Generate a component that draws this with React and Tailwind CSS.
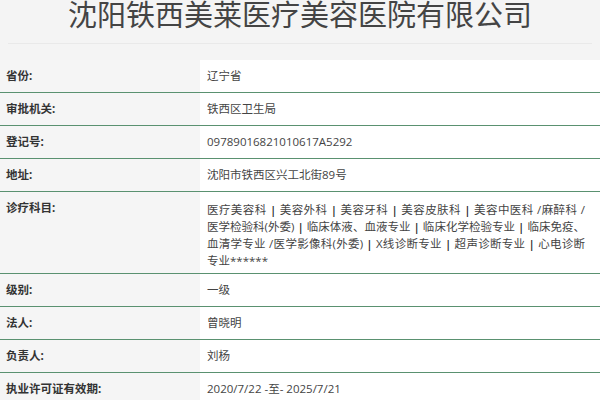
const rows = [
  { label: '省份:', value: '辽宁省' },
  { label: '审批机关:', value: '铁西区卫生局' },
  { label: '登记号:', value: '09789016821010617A5292' },
  { label: '地址:', value: '沈阳市铁西区兴工北街89号' },
  {
    label: '诊疗科目:',
    lines: [
      '医疗美容科 | 美容外科 | 美容牙科 | 美容皮肤科 | 美容中医科 /麻醉科 /',
      '医学检验科(外委) | 临床体液、血液专业 | 临床化学检验专业 | 临床免疫、',
      '血清学专业 /医学影像科(外委) | X线诊断专业 | 超声诊断专业 | 心电诊断',
      '专业******',
    ],
  },
  { label: '级别:', value: '一级' },
  { label: '法人:', value: '曾晓明' },
  { label: '负责人:', value: '刘杨' },
  { label: '执业许可证有效期:', value: '2020/7/22 -至- 2025/7/21' },
];

// bars between the subjects are a little darker than the text
const renderLine = (line) =>
  line.split(' | ').map((part, k) => (
    <span key={k}>
      {k > 0 && (
        <>
          {' '}
          <span className="font-semibold text-[#222]">|</span>{' '}
        </>
      )}
      {part}
    </span>
  ));

const App = () => {
  return (
    <div
      className="w-[600px] h-[400px] overflow-hidden bg-[#f4f4f4]"
      style={{ fontFamily: '"Open Sans", "Noto Sans CJK SC", sans-serif' }}
    >
      <div className="mx-2 h-[44px] border-b border-[#e9e9e9] flex justify-center">
        <h1 className="text-[29px] leading-[29px] font-normal text-[#444]">
          沈阳铁西美莱医疗美容医院有限公司
        </h1>
      </div>

      <div className="mt-[16px] text-[11.5px]">
        {rows.map((row, i) => (
          <div key={i} className="flex border-b border-[#5a9170]">
            <div className="w-[200px] shrink-0 bg-[#f5f5f5] pl-[6px]">
              <span className="leading-[32px] font-bold text-[#333]">{row.label}</span>
            </div>
            <div className="flex-1 bg-white pl-[7px] pr-[15px]">
              {row.lines ? (
                <div className="h-[81px] pt-[9px] leading-[17px] text-[#444]">
                  {row.lines.map((line, j) => (
                    <p
                      key={j}
                      className={
                        j < row.lines.length - 1
                          ? 'whitespace-nowrap text-justify [text-align-last:justify]'
                          : 'whitespace-nowrap'
                      }
                    >
                      {renderLine(line)}
                    </p>
                  ))}
                </div>
              ) : (
                <p className="leading-[32px] text-[#444]">{row.value}</p>
              )}
            </div>
          </div>
        ))}
      </div>
    </div>
  );
};

export default App;
